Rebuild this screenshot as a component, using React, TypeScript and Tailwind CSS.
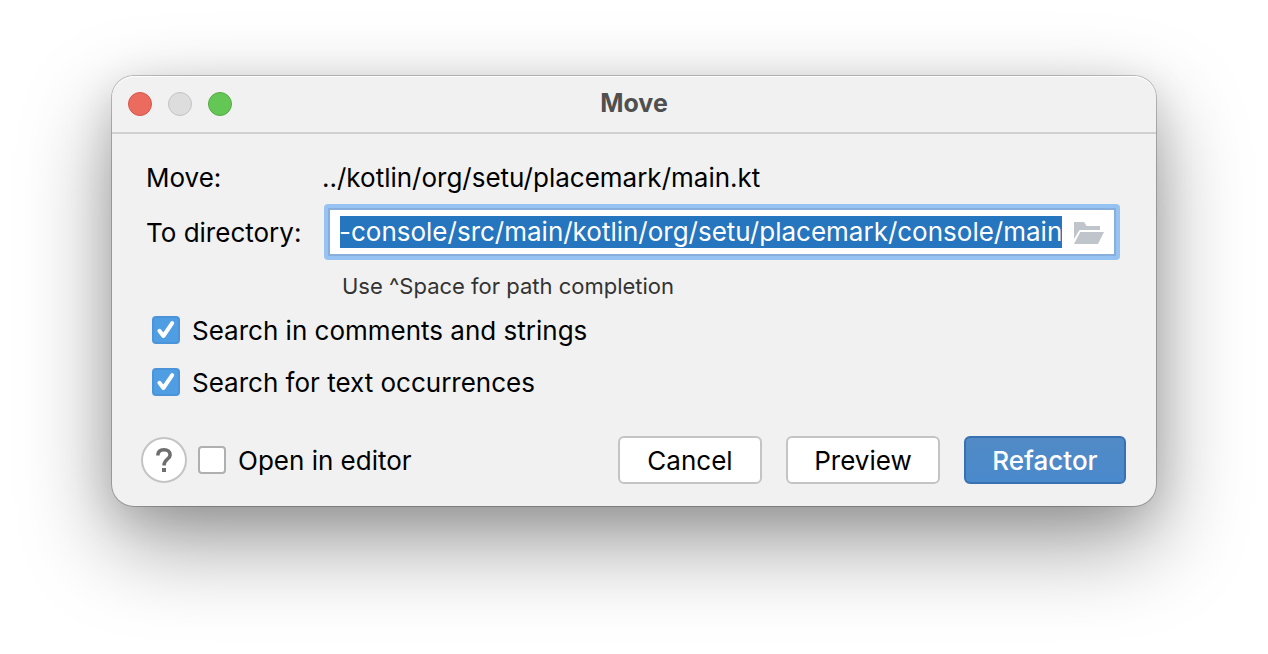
import { useLayoutEffect, useRef } from "react";

function Check({ id, label, checked }: { id: string; label: string; checked?: boolean }) {
  return (
    <div className="flex h-7 items-center gap-3">
      <span className="relative block size-7">
        <input
          id={id}
          type="checkbox"
          defaultChecked={checked}
          className="peer block size-7 appearance-none rounded border-2 border-[#b0b0b0] bg-white checked:border-[#4b94da] checked:bg-[#4f9ee3]"
        />
        <svg
          viewBox="0 0 28 28"
          className="pointer-events-none absolute inset-0 hidden size-7 peer-checked:block"
          fill="none"
          stroke="#fff"
          strokeWidth="4"
          strokeLinecap="round"
          strokeLinejoin="round"
          aria-hidden="true"
        >
          <path d="M7.4 14.8 L11.4 20 L20.2 7.2" />
        </svg>
      </span>
      <label htmlFor={id} className="pt-0.5">{label}</label>
    </div>
  );
}

export default function App() {
  const path = useRef<HTMLInputElement>(null);

  useLayoutEffect(() => {
    const field = path.current;
    if (!field) return;
    field.focus();
    field.select();
    field.scrollLeft = field.scrollWidth;
  }, []);

  return (
    <main className="min-h-screen bg-white px-28 pt-[76px] pb-20 font-['Inter','Liberation_Sans',sans-serif] text-[26px] leading-8 text-black">
      <section
        aria-labelledby="title"
        className="rounded-[22px] bg-[#f1f1f1] shadow-[0_0_0_1px_rgba(0,0,0,0.22),0_36px_90px_rgba(0,0,0,0.4),0_10px_40px_rgba(0,0,0,0.12)]"
      >
        <header className="grid h-[58px] grid-cols-[1fr_auto_1fr] items-center rounded-t-[22px] border-b-2 border-[#d0d0d0] px-4 shadow-[inset_0_1px_0_#fff]">
          <div className="flex gap-4">
            <button aria-label="Close" className="size-6 rounded-full border border-[#d6554b] bg-[#ec6b5f]" />
            <button aria-label="Minimize" disabled className="size-6 rounded-full border border-[#c3c3c3] bg-[#dddddd]" />
            <button aria-label="Zoom" className="size-6 rounded-full border border-[#55ab41] bg-[#64c655]" />
          </div>
          <h1 id="title" className="pb-0.5 text-[25px] font-bold text-[#4f4f4f]">Move</h1>
        </header>

        <form onSubmit={(e) => e.preventDefault()} className="pt-[26px] pr-[30px] pb-[22px] pl-[34px]">
          <div className="grid grid-cols-[176px_1fr] items-center gap-y-[10px] pr-1.5">
            <span className="pt-0.5">Move:</span>
            <span className="pt-0.5">../kotlin/org/setu/placemark/main.kt</span>
            <label htmlFor="directory" className="pt-0.5">To directory:</label>
            <div className="ml-0.5 rounded bg-[#97c3f3] p-1">
              <div className="flex h-12 items-center border-2 border-[#87afda] bg-white pr-2.5 pl-2.5">
                <input
                  id="directory"
                  ref={path}
                  type="text"
                  spellCheck={false}
                  defaultValue="-console/src/main/kotlin/org/setu/placemark/console/main"
                  className="h-8 min-w-0 flex-1 bg-transparent leading-8 outline-none selection:bg-[#2675bf] selection:text-white"
                />
                <button type="button" aria-label="Browse" className="ml-3 block pt-0.5">
                  <svg viewBox="0 0 30 22" className="h-[22px] w-[30px]" fill="#bfc5ca" aria-hidden="true">
                    <path d="M0 0 H10 L12.5 4 H26 V8 H5.5 L0 17 Z" />
                    <path d="M6.3 10 H30 L24 22 H0 Z" />
                  </svg>
                </button>
              </div>
            </div>
          </div>
          <p className="mt-2 pl-[196px] text-[22px] leading-9 text-[#333]">Use ^Space for path completion</p>

          <div className="mt-3 flex flex-col gap-6 pl-1.5">
            <Check id="comments" label="Search in comments and strings" checked />
            <Check id="occurrences" label="Search for text occurrences" checked />
          </div>

          <footer className="mt-10 -ml-[5px] flex items-center gap-6">
            <div className="mr-auto flex items-center gap-[11px]">
              <button
                type="button"
                aria-label="Help"
                className="flex size-[46px] items-center justify-center rounded-full border-2 border-[#c4c4c4] bg-white"
              >
                <svg viewBox="0 0 16 24" className="h-6 w-4" fill="none" aria-hidden="true">
                  <path
                    d="M1.8 7.6 C1.8 3.8 4.2 1.8 8 1.8 C11.7 1.8 14.1 3.8 14.1 7 C14.1 11 8 11.3 8 17.4"
                    stroke="#6e6e6e"
                    strokeWidth="3.6"
                  />
                  <path d="M6 20 H10 V24 H6 Z" fill="#6e6e6e" />
                </svg>
              </button>
              <Check id="open" label="Open in editor" />
            </div>
            <button type="button" className="h-12 w-36 rounded-md border-2 border-[#c4c4c4] bg-white pt-0.5">Cancel</button>
            <button type="button" className="h-12 w-[154px] rounded-md border-2 border-[#c4c4c4] bg-white pt-0.5">Preview</button>
            <button
              type="submit"
              className="h-12 w-[162px] rounded-md border-2 border-[#3871b2] bg-linear-to-b from-[#528bc6] to-[#4989cc] bg-origin-border pt-0.5 font-medium text-white"
            >
              Refactor
            </button>
          </footer>
        </form>
      </section>
    </main>
  );
}
